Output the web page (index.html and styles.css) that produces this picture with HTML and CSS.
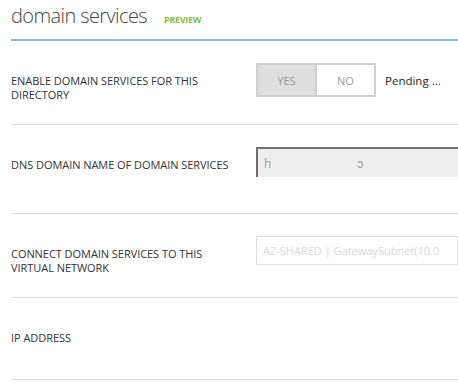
FILE: index.html
```html
<!DOCTYPE html>
<html lang="en">
<head>
  <meta charset="UTF-8" />
  <title>domain services</title>
  <link rel="stylesheet" href="styles.css">
</head>
<body>
  <div class="header">
    <h1>domain services</h1>
    <span class="badge">PREVIEW</span>
  </div>

  <div class="form">
    <!-- enable -->
    <div class="row row-enable">
      <div class="label">ENABLE DOMAIN SERVICES FOR THIS DIRECTORY</div>
      <div class="control">
        <div class="toggle">
          <span class="opt on">YES</span>
          <span class="opt">NO</span>
        </div>
        <span class="status">Pending ...</span>
      </div>
    </div>

    <!-- dns name -->
    <div class="row row-dns">
      <div class="label">DNS DOMAIN NAME OF DOMAIN SERVICES</div>
      <div class="control">
        <div class="input readonly"><span>h</span><span class="gap">ɔ</span></div>
      </div>
    </div>

    <!-- vnet -->
    <div class="row row-vnet">
      <div class="label">CONNECT DOMAIN SERVICES TO THIS VIRTUAL NETWORK</div>
      <div class="control">
        <div class="input select">AZ-SHARED | GatewaySubnet(10.0</div>
      </div>
    </div>

    <!-- ip -->
    <div class="row row-ip">
      <div class="label">IP ADDRESS</div>
      <div class="control"></div>
    </div>
  </div>
</body>
</html>
```

FILE: styles.css
```css
body {
  margin: 0;
  font-family: "Open Sans", sans-serif;
  color: #333;
  background: #fff;
  overflow: hidden;
}

.header {
  display: flex;
  align-items: baseline;
  margin-left: 11px;
  height: 41px;
  border-bottom: 2px solid #8cb9e6;
  box-sizing: border-box;
}

h1 {
  margin: 0;
  padding-top: 2px;
  font-size: 20px;
  font-weight: 300;
  color: #444;
  letter-spacing: -0.6px;
}

.badge {
  margin-left: 17px;
  font-size: 9px;
  font-weight: 700;
  letter-spacing: -0.3px;
  color: #7dc242;
}

.form {
  margin-left: 11px;
}

.row {
  display: grid;
  grid-template-columns: 245px 1fr;
  border-bottom: 1px solid #dcdcdc;
  box-sizing: border-box;
}

.row-enable { height: 84px; }
.row-dns { height: 89px; }
.row-vnet { height: 84px; }
.row-ip { height: 82px; }

.label {
  padding-top: 33px;
  font-size: 11px;
  line-height: 14px;
  letter-spacing: -0.05px;
  padding-right: 20px;
}

.control {
  display: flex;
  align-items: center;
  align-self: start;
  margin-top: 22px;
  min-width: 0;
}

.toggle {
  display: flex;
  border: 2px solid #cfcfcf;
  height: 34px;
  box-sizing: border-box;
}

.opt {
  width: 57px;
  display: flex;
  align-items: center;
  justify-content: center;
  font-size: 11px;
  color: #999;
  background: #fff;
}

.opt.on {
  background: #dedede;
  border-right: 2px solid #cfcfcf;
}

.status {
  margin-left: 9px;
  font-size: 11.5px;
  color: #222;
}

.input {
  height: 30px;
  width: 100%;
  margin-right: -10px;
  box-sizing: border-box;
  display: flex;
  align-items: center;
  padding-left: 6px;
  font-size: 12px;
  white-space: nowrap;
  overflow: hidden;
}

.readonly {
  background: #efefef;
  border-top: 2px solid #707070;
  border-left: 2px solid #707070;
  color: #999;
}

.readonly .gap {
  margin-left: 86px;
}

.select {
  height: 29px;
  border: 1px solid #dddddd;
  color: #d8d8d8;
  font-size: 11px;
}
```
